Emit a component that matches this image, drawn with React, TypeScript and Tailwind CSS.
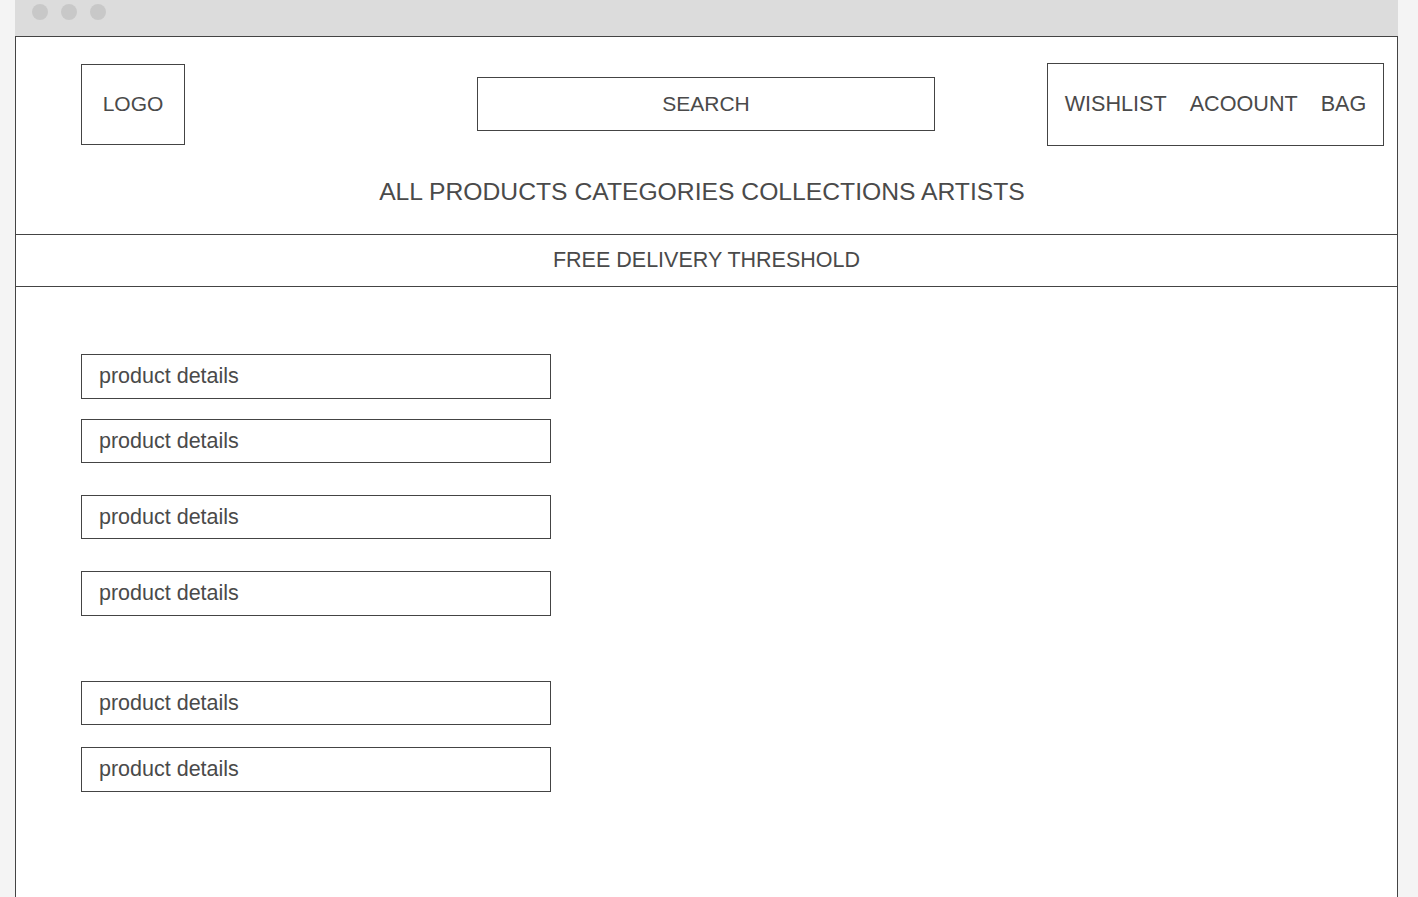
import React from "react";

const products = [
  { id: 1, mt: "mt-0", h: "h-[45px]" },
  { id: 2, mt: "mt-[20px]", h: "h-[44px]" },
  { id: 3, mt: "mt-[32px]", h: "h-[44px]" },
  { id: 4, mt: "mt-[32px]", h: "h-[45px]" },
  { id: 5, mt: "mt-[65px]", h: "h-[44px]" },
  { id: 6, mt: "mt-[22px]", h: "h-[45px]" },
];

const App = () => {
  return (
    <div
      className="w-full h-[897px] overflow-hidden bg-[#f4f4f4] text-[#4a4a4a]"
      style={{ fontFamily: '"Liberation Sans", Arial, sans-serif' }}
    >
      {/* browser chrome */}
      <div className="ml-[15px] w-[1383px] h-[36px] bg-[#dcdcdc] flex items-start gap-[13px] pl-[17px] pt-[4px]">
        <span className="w-[16px] h-[16px] rounded-full bg-[#c8c8c8]" />
        <span className="w-[16px] h-[16px] rounded-full bg-[#c8c8c8]" />
        <span className="w-[16px] h-[16px] rounded-full bg-[#c8c8c8]" />
      </div>

      <div className="ml-[15px] w-[1383px] h-[861px] bg-white border-x border-t border-[#444]">
        {/* header */}
        <div className="h-[198px] border-b border-[#444] flex flex-col">
          <div className="flex items-center pl-[65px] pt-[26px] h-[109px]">
            <div className="w-[104px] h-[81px] border border-[#444] flex items-center justify-center pb-[2px] text-[21px]">
              LOGO
            </div>
            <div className="ml-[292px] mb-[2px] w-[458px] h-[54px] border border-[#444] flex items-center justify-center text-[21px]">
              SEARCH
            </div>
            <div className="ml-[112px] w-[337px] h-[83px] border border-[#444] flex items-center justify-center gap-[23px] text-[21.6px]">
              <span>WISHLIST</span>
              <span>ACOOUNT</span>
              <span>BAG</span>
            </div>
          </div>
          <div className="flex-1 flex items-center justify-center pt-[3px] pr-[9px] text-[24.7px]">
            ALL PRODUCTS CATEGORIES COLLECTIONS ARTISTS
          </div>
        </div>

        {/* delivery banner */}
        <div className="h-[52px] border-b border-[#444] flex items-center justify-center text-[21.5px]">
          FREE DELIVERY THRESHOLD
        </div>

        {/* product list */}
        <div className="pl-[65px] pt-[67px] flex flex-col">
          {products.map((p) => (
            <div
              key={p.id}
              className={`${p.mt} ${p.h} w-[470px] border border-[#444] flex items-center pl-[17px] text-[21.5px]`}
            >
              product details
            </div>
          ))}
        </div>
      </div>
    </div>
  );
};

export default App;
